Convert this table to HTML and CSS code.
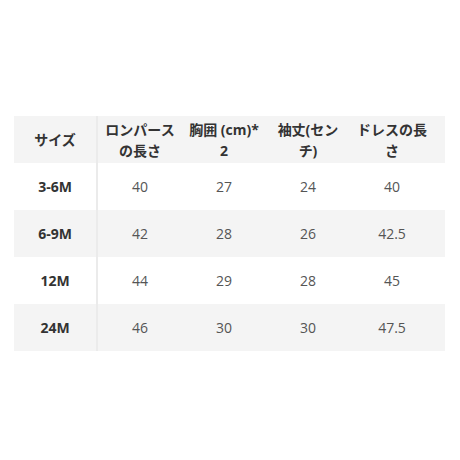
FILE: index.html
```html
<!DOCTYPE html>
<html lang="ja">
<head>
<meta charset="utf-8">
<link rel="stylesheet" href="styles.css">
</head>
<body>
<div class="page">
  <div class="table">
    <div class="row head">
      <div class="cell first">サイズ</div>
      <div class="cell">ロンパースの長さ</div>
      <div class="cell">胸囲 (cm)*2</div>
      <div class="cell">袖丈(センチ)</div>
      <div class="cell">ドレスの長さ</div>
    </div>
    <div class="row">
      <div class="cell first">3-6M</div>
      <div class="cell">40</div>
      <div class="cell">27</div>
      <div class="cell">24</div>
      <div class="cell">40</div>
    </div>
    <div class="row alt">
      <div class="cell first">6-9M</div>
      <div class="cell">42</div>
      <div class="cell">28</div>
      <div class="cell">26</div>
      <div class="cell">42.5</div>
    </div>
    <div class="row">
      <div class="cell first">12M</div>
      <div class="cell">44</div>
      <div class="cell">29</div>
      <div class="cell">28</div>
      <div class="cell">45</div>
    </div>
    <div class="row alt">
      <div class="cell first">24M</div>
      <div class="cell">46</div>
      <div class="cell">30</div>
      <div class="cell">30</div>
      <div class="cell">47.5</div>
    </div>
  </div>
</div>
</body>
</html>
```

FILE: styles.css
```css
html, body {
  margin: 0;
  padding: 0;
  background: #ffffff;
}

.page {
  padding: 116px 0 0 14px;
  font-family: "Open Sans", "Noto Sans CJK JP", sans-serif;
  font-size: 14px;
  color: #555555;
}

.table {
  width: 431px;
}

.row {
  display: grid;
  grid-template-columns: 84px 84px 84px 84px 84px;
  padding-right: 11px;
  height: 47px;
}

.row.head,
.row.alt {
  background: #f4f4f4;
}

.cell {
  display: flex;
  align-items: center;
  justify-content: center;
  text-align: center;
  padding: 0 7px;
  line-height: 21px;
  word-break: break-all;
}

.head .cell {
  font-weight: 700;
  color: #333333;
}

.cell.first {
  font-weight: 700;
  color: #333333;
  border-right: 2px solid #ebebeb;
}
```
